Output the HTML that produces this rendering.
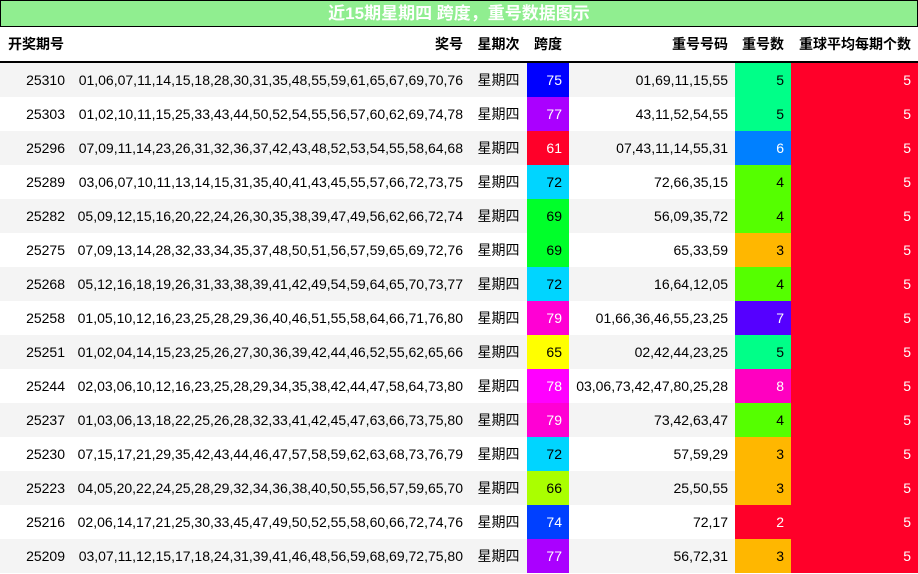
<!DOCTYPE html>
<html><head><meta charset="utf-8"><style>
body{margin:0;width:918px;height:574px;overflow:hidden;background:#fff;font-family:"Liberation Sans","Noto Sans CJK SC",sans-serif;font-size:14px;color:#000}
.t{position:absolute;left:0;top:0;width:916px;height:25px;background:#90EE90;border:1px solid #000;color:#fff;font-weight:bold;font-size:17px;text-align:center;line-height:26px}
table{position:absolute;left:0;top:27px;border-collapse:collapse;table-layout:fixed;width:918px}
td,th{padding:0 7px 0 0;text-align:right;white-space:nowrap;overflow:hidden}
th{height:34px;font-weight:bold;border-bottom:2px solid #000}
td{height:34px}
tr.o td{background:#f4f4f4}
.c{text-align:center;padding:0}
.w{color:#fff}
</style></head><body>
<div class="t">近15期星期四 跨度，重号数据图示</div>
<table>
<colgroup><col style="width:72px"><col style="width:398px"><col style="width:57px"><col style="width:42px"><col style="width:166px"><col style="width:56px"><col style="width:127px"></colgroup>
<tr><th style="text-align:left;padding-left:8px">开奖期号</th><th>奖号</th><th class="c">星期次</th><th class="c">跨度</th><th>重号号码</th><th>重号数</th><th>重球平均每期个数</th></tr>
<tr class="o"><td>25310</td><td>01,06,07,11,14,15,18,28,30,31,35,48,55,59,61,65,67,69,70,76</td><td class="c">星期四</td><td class="w" style="background:#0000ff!important">75</td><td>01,69,11,15,55</td><td style="background:#00ff88!important">5</td><td class="w" style="background:#ff0029!important">5</td></tr>
<tr><td>25303</td><td>01,02,10,11,15,25,33,43,44,50,52,54,55,56,57,60,62,69,74,78</td><td class="c">星期四</td><td class="w" style="background:#aa00ff">77</td><td>43,11,52,54,55</td><td style="background:#00ff88">5</td><td class="w" style="background:#ff0029">5</td></tr>
<tr class="o"><td>25296</td><td>07,09,11,14,23,26,31,32,36,37,42,43,48,52,53,54,55,58,64,68</td><td class="c">星期四</td><td class="w" style="background:#ff0029!important">61</td><td>07,43,11,14,55,31</td><td class="w" style="background:#0080ff!important">6</td><td class="w" style="background:#ff0029!important">5</td></tr>
<tr><td>25289</td><td>03,06,07,10,11,13,14,15,31,35,40,41,43,45,55,57,66,72,73,75</td><td class="c">星期四</td><td style="background:#00d5ff">72</td><td>72,66,35,15</td><td style="background:#55ff00">4</td><td class="w" style="background:#ff0029">5</td></tr>
<tr class="o"><td>25282</td><td>05,09,12,15,16,20,22,24,26,30,35,38,39,47,49,56,62,66,72,74</td><td class="c">星期四</td><td style="background:#00ff2a!important">69</td><td>56,09,35,72</td><td style="background:#55ff00!important">4</td><td class="w" style="background:#ff0029!important">5</td></tr>
<tr><td>25275</td><td>07,09,13,14,28,32,33,34,35,37,48,50,51,56,57,59,65,69,72,76</td><td class="c">星期四</td><td style="background:#00ff2a">69</td><td>65,33,59</td><td style="background:#ffb700">3</td><td class="w" style="background:#ff0029">5</td></tr>
<tr class="o"><td>25268</td><td>05,12,16,18,19,26,31,33,38,39,41,42,49,54,59,64,65,70,73,77</td><td class="c">星期四</td><td style="background:#00d5ff!important">72</td><td>16,64,12,05</td><td style="background:#55ff00!important">4</td><td class="w" style="background:#ff0029!important">5</td></tr>
<tr><td>25258</td><td>01,05,10,12,16,23,25,28,29,36,40,46,51,55,58,64,66,71,76,80</td><td class="c">星期四</td><td class="w" style="background:#ff00d4">79</td><td>01,66,36,46,55,23,25</td><td class="w" style="background:#5500ff">7</td><td class="w" style="background:#ff0029">5</td></tr>
<tr class="o"><td>25251</td><td>01,02,04,14,15,23,25,26,27,30,36,39,42,44,46,52,55,62,65,66</td><td class="c">星期四</td><td style="background:#ffff00!important">65</td><td>02,42,44,23,25</td><td style="background:#00ff88!important">5</td><td class="w" style="background:#ff0029!important">5</td></tr>
<tr><td>25244</td><td>02,03,06,10,12,16,23,25,28,29,34,35,38,42,44,47,58,64,73,80</td><td class="c">星期四</td><td class="w" style="background:#ff00ff">78</td><td>03,06,73,42,47,80,25,28</td><td class="w" style="background:#ff00c0">8</td><td class="w" style="background:#ff0029">5</td></tr>
<tr class="o"><td>25237</td><td>01,03,06,13,18,22,25,26,28,32,33,41,42,45,47,63,66,73,75,80</td><td class="c">星期四</td><td class="w" style="background:#ff00d4!important">79</td><td>73,42,63,47</td><td style="background:#55ff00!important">4</td><td class="w" style="background:#ff0029!important">5</td></tr>
<tr><td>25230</td><td>07,15,17,21,29,35,42,43,44,46,47,57,58,59,62,63,68,73,76,79</td><td class="c">星期四</td><td style="background:#00d5ff">72</td><td>57,59,29</td><td style="background:#ffb700">3</td><td class="w" style="background:#ff0029">5</td></tr>
<tr class="o"><td>25223</td><td>04,05,20,22,24,25,28,29,32,34,36,38,40,50,55,56,57,59,65,70</td><td class="c">星期四</td><td style="background:#aaff00!important">66</td><td>25,50,55</td><td style="background:#ffb700!important">3</td><td class="w" style="background:#ff0029!important">5</td></tr>
<tr><td>25216</td><td>02,06,14,17,21,25,30,33,45,47,49,50,52,55,58,60,66,72,74,76</td><td class="c">星期四</td><td class="w" style="background:#0040ff">74</td><td>72,17</td><td class="w" style="background:#ff0029">2</td><td class="w" style="background:#ff0029">5</td></tr>
<tr class="o"><td>25209</td><td>03,07,11,12,15,17,18,24,31,39,41,46,48,56,59,68,69,72,75,80</td><td class="c">星期四</td><td class="w" style="background:#aa00ff!important">77</td><td>56,72,31</td><td style="background:#ffb700!important">3</td><td class="w" style="background:#ff0029!important">5</td></tr>
</table>
</body></html>
